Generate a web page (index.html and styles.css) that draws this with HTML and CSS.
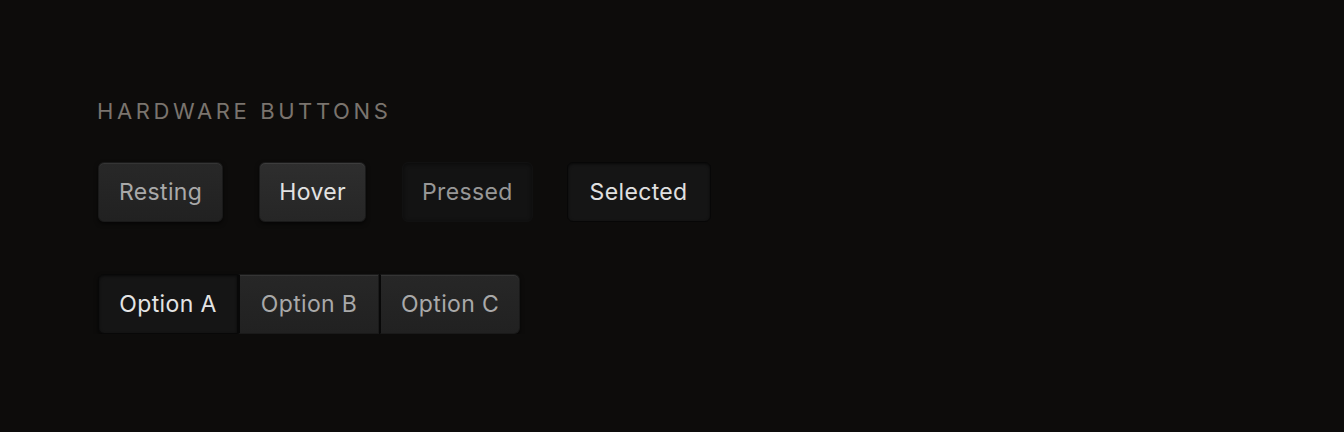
FILE: index.html
```html
<!DOCTYPE html>
<html lang="en">
<head>
    <meta charset="UTF-8">
    <meta name="viewport" content="width=device-width, initial-scale=1.0">
    <title>Hardware Buttons</title>
    <link rel="stylesheet" href="styles.css">
</head>
<body>

<div class="panel">
    <h2 class="label">Hardware Buttons</h2>

    <div class="row">
        <button class="hw">Resting</button>
        <button class="hw hover">Hover</button>
        <button class="hw pressed">Pressed</button>
        <button class="hw selected">Selected</button>
    </div>

    <div class="segmented">
        <button class="seg active">Option A</button>
        <button class="seg">Option B</button>
        <button class="seg">Option C</button>
    </div>
</div>

</body>
</html>
```

FILE: styles.css
```css
body {
    margin: 0;
    background-color: #0d0c0b;
    font-family: Inter, "Noto Sans", sans-serif;
}
.panel {
    padding: 97px 0 0 98px;
    display: flex;
    flex-direction: column;
    align-items: flex-start;
}
.label {
    margin: 0 0 0 -1px;
    font-size: 22px;
    font-weight: 400;
    line-height: 28px;
    letter-spacing: 3.6px;
    text-transform: uppercase;
    color: #7a746e;
}
.row {
    display: flex;
    gap: 36px;
    margin-top: 37px;
}
button {
    font-family: inherit;
    font-size: 23px;
    letter-spacing: 0.35px;
    white-space: nowrap;
    height: 60px;
    padding: 0 20px;
    border-radius: 6px;
    cursor: pointer;
}
.hw {
    color: #a9a9a9;
    background: linear-gradient(#282828, #212121);
    border: 1px solid #1a1a1a;
    box-shadow: inset 0 1px 0 #353535, 0 2px 4px rgba(0, 0, 0, 0.6);
}
.hw.hover {
    padding: 0 19px;
    color: #e2e2e2;
    background: linear-gradient(#2e2e2e, #262626);
    box-shadow: inset 0 1px 0 #3d3d3d, 0 2px 4px rgba(0, 0, 0, 0.6);
}
.hw.pressed {
    padding: 0 19px;
    color: #979797;
    background: #131313;
    border-color: #111;
    box-shadow: inset 0 1px 4px rgba(0, 0, 0, 0.5);
}
.hw.selected {
    margin-left: -2px;
    padding: 0 22px;
    color: #e0e0e0;
    background: #151515;
    border: 1px solid #070707;
    box-shadow: inset 0 1px 3px rgba(0, 0, 0, 0.6);
}
.segmented {
    display: flex;
    margin-top: 52px;
    border-radius: 6px;
    box-shadow: 0 2px 4px rgba(0, 0, 0, 0.6);
}
.seg {
    width: 141px;
    padding: 0;
    border-radius: 0;
    color: #a9a9a9;
    background: linear-gradient(#272727, #212121);
    border: 1px solid #1a1a1a;
    border-left: 2px solid #080808;
    box-shadow: inset 0 1px 0 #353535;
}
.seg:first-child {
    border-radius: 6px 0 0 6px;
    border-left: 1px solid #080808;
}
.seg:last-child {
    border-radius: 0 6px 6px 0;
}
.seg.active {
    width: 140px;
    color: #e4e4e4;
    background: #151515;
    border-color: #080808;
    box-shadow: inset 0 1px 3px rgba(0, 0, 0, 0.6);
}
```
